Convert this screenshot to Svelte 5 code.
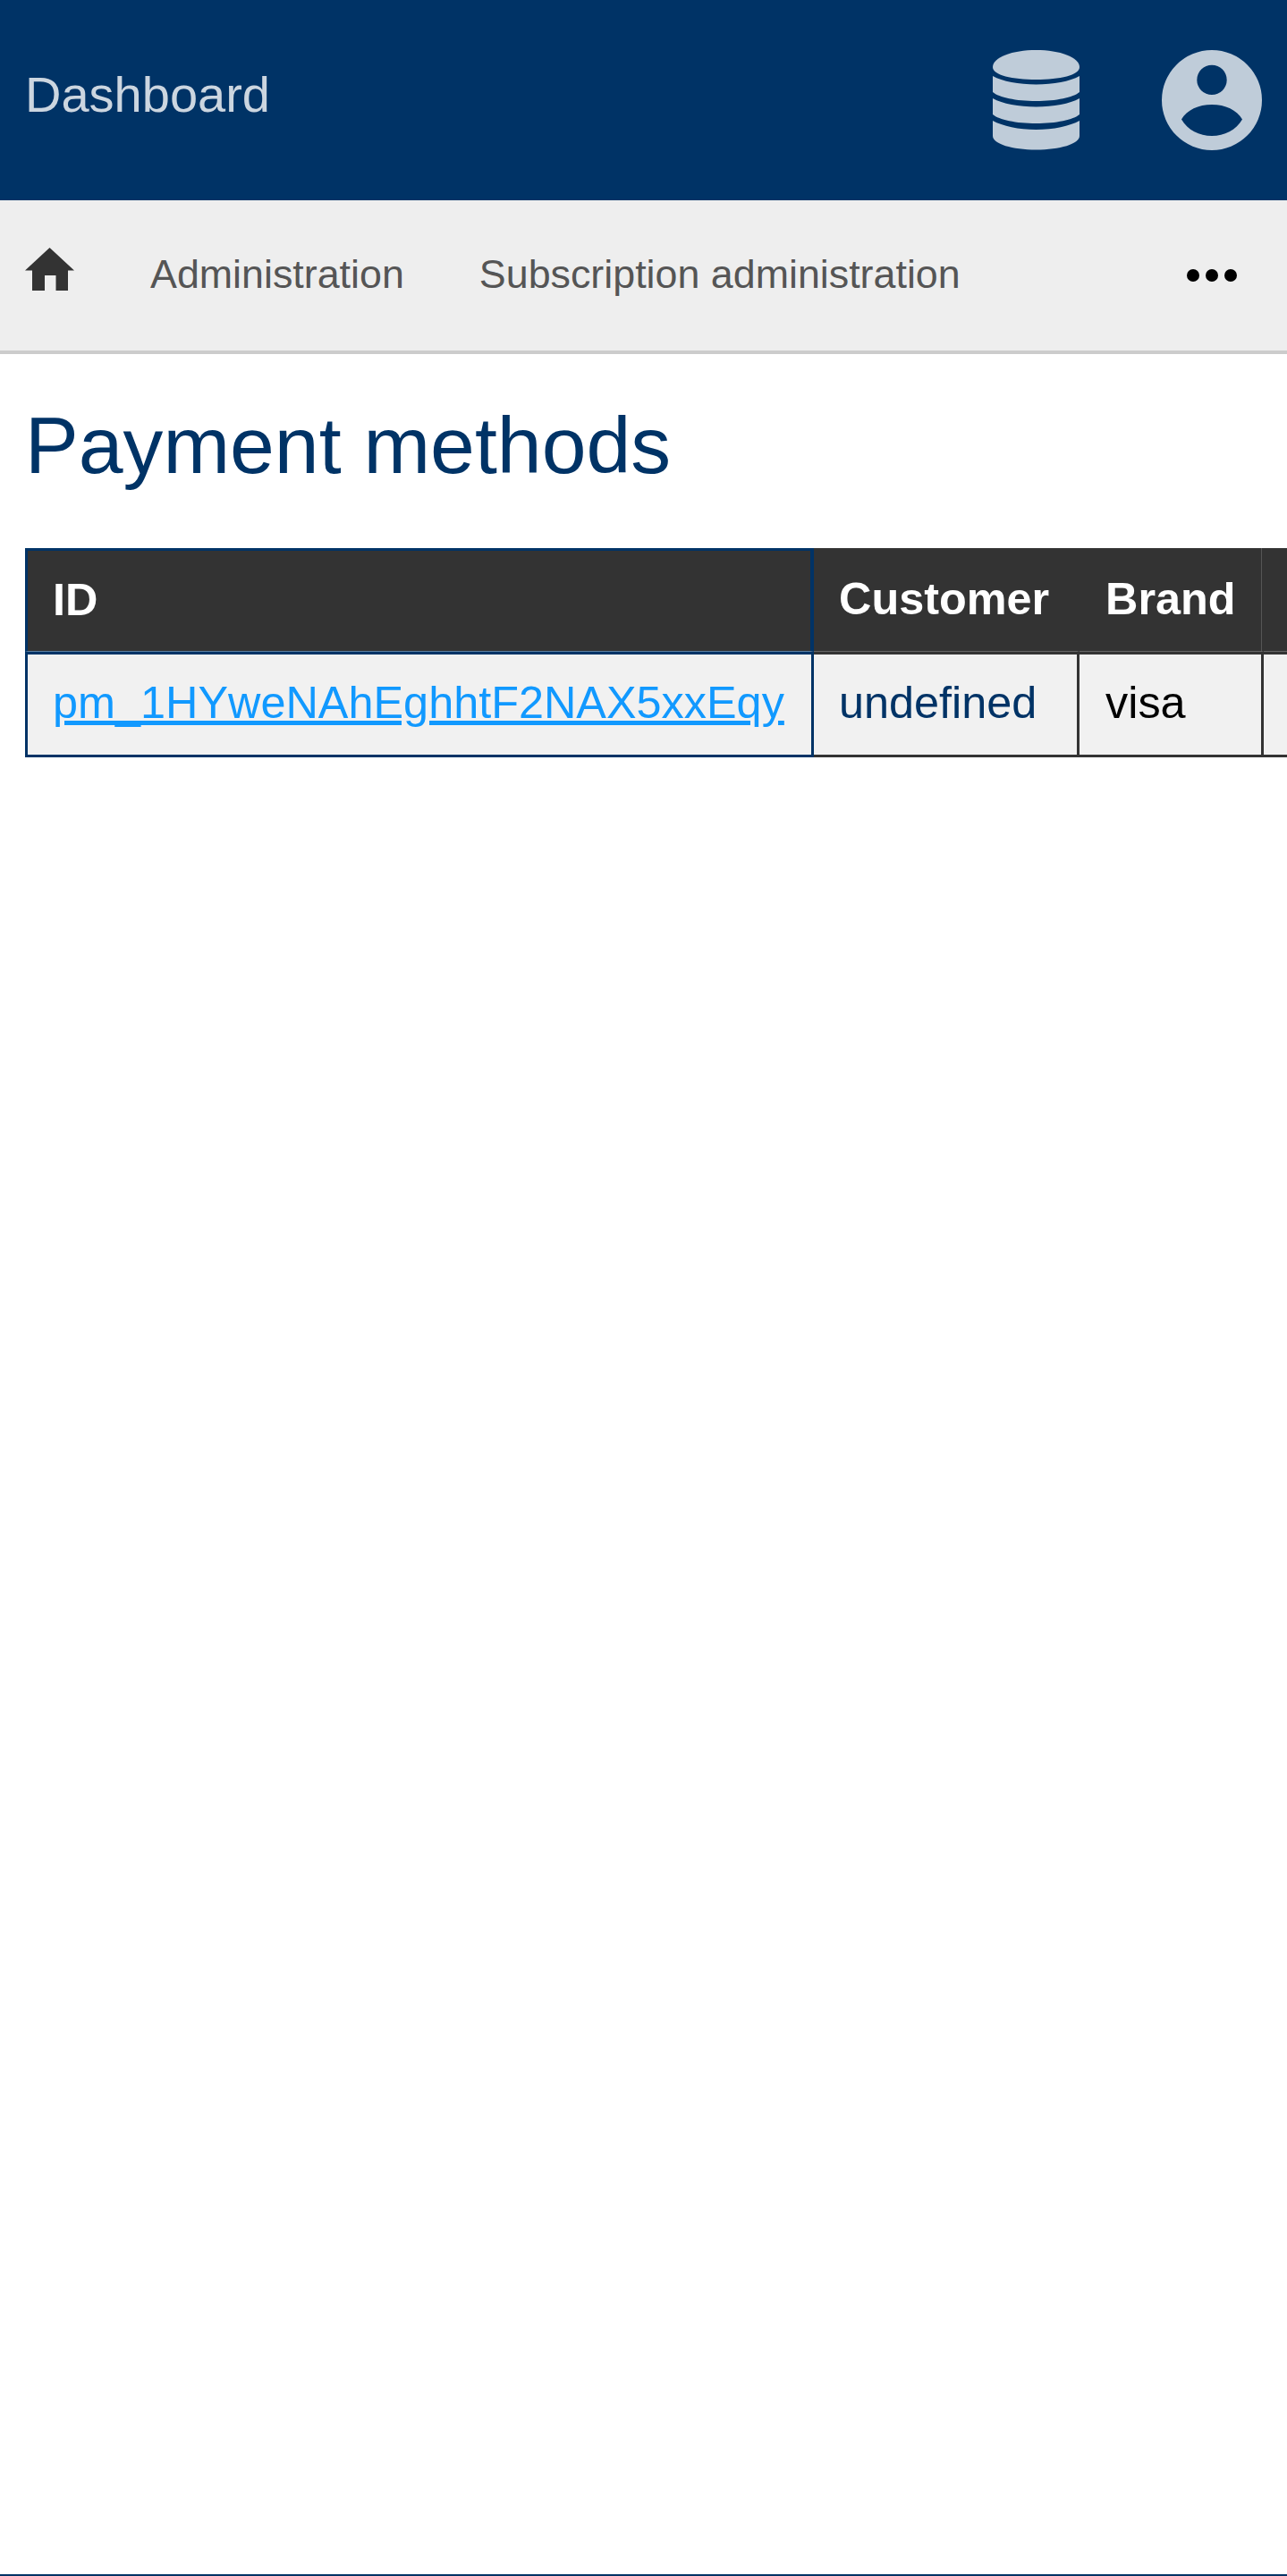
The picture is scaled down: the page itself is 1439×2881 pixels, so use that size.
<script>
  const columns = [
    { key: 'id', label: 'ID' },
    { key: 'customer', label: 'Customer' },
    { key: 'brand', label: 'Brand' },
    { key: 'extra', label: '' }
  ];
  const row = { id: 'pm_1HYweNAhEghhtF2NAX5xxEqy', customer: 'undefined', brand: 'visa', extra: '' };
</script>

<div class="page">
  <header class="topbar">
    <a class="title" href="#/">Dashboard</a>
    <div class="top-icons">
      <svg class="db" viewBox="0 0 97 112" aria-hidden="true">
        <path d="M0 19C0 8 22 0 48.500 0S97 8 97 19C97 28 75 33 48.500 33S0 28 0 19Z" />
        <path d="M0 29C11 35 29 38.500 48.500 38.500S86 35 97 29V47C90 53 71 57 48.500 57S7 53 0 47Z" />
        <path d="M0 54C11 60 29 63.500 48.500 63.500S86 60 97 54V72C90 78 71 82 48.500 82S7 78 0 72Z" />
        <path d="M0 79C11 85 29 89 48.500 89S86 85 97 79V96C97 105 75 111.500 48.500 111.500S0 105 0 96Z" />
      </svg>
      <svg class="user" viewBox="0 0 112 112" aria-hidden="true">
        <path fill-rule="evenodd" d="M56 0a56 56 0 1 0 0 112A56 56 0 0 0 56 0Zm0 16.700a16.700 16.700 0 1 1 0 33.400 16.700 16.700 0 0 1 0-33.400ZM56 61c15 0 28 6 34 16.500C83 89.500 70 96 56 96S29 89.500 22 77.500C28 67 41 61 56 61Z" />
      </svg>
    </div>
  </header>

  <nav class="menu">
    <a class="home" href="#/" aria-label="Home">
      <svg viewBox="0 0 55 48" aria-hidden="true">
        <path d="M27.500 0 55 25.500H48V48H34.500V31H22V48H8V25.500H0Z" />
      </svg>
    </a>
    <a class="link" href="#/admin">Administration</a>
    <a class="link" href="#/subscriptions">Subscription administration</a>
    <span class="more" aria-hidden="true"><i></i><i></i><i></i></span>
  </nav>

  <main class="content">
    <h1>Payment methods</h1>
    <div class="table-wrap">
      <table>
        <thead>
          <tr>
            {#each columns as col}
              <th class={col.key}>{col.label}</th>
            {/each}
          </tr>
        </thead>
        <tbody>
          <tr>
            <td class="id"><a href="#/pm">{row.id}</a></td>
            <td class="customer">{row.customer}</td>
            <td class="brand">{row.brand}</td>
            <td class="extra"></td>
          </tr>
        </tbody>
      </table>
    </div>
  </main>
  <div class="bottom-line"></div>
</div>

<style>
  :global(body) {
    margin: 0;
    background: #fff;
  }

  .page {
    display: flex;
    flex-direction: column;
    width: 1439px;
    height: 2881px;
    overflow: hidden;
    font-family: "Liberation Sans", Arial, sans-serif;
  }

  .topbar {
    display: flex;
    flex: none;
    align-items: center;
    justify-content: space-between;
    height: 224px;
    padding: 0 28px;
    box-sizing: border-box;
    background: #003366;
  }

  .title {
    margin-bottom: 13px;
    color: #ccd6e0;
    font-size: 56px;
    text-decoration: none;
  }

  .top-icons {
    display: flex;
    align-items: center;
    gap: 92px;
  }

  .top-icons svg {
    display: block;
    fill: #bfccd9;
  }

  .db {
    width: 97px;
    height: 112px;
  }

  .user {
    width: 112px;
    height: 112px;
  }

  .menu {
    display: flex;
    flex: none;
    align-items: center;
    height: 172px;
    padding: 0 56px 0 28px;
    box-sizing: border-box;
    background: #eeeeee;
    border-bottom: 4px solid #cccccc;
    font-size: 44.800px;
  }

  .link {
    margin: 0 84px 3px 0;
    color: #555555;
    text-decoration: none;
  }

  .home {
    display: block;
    width: 55px;
    height: 48px;
    margin: 0 85px 14px 0;
  }

  .home svg {
    display: block;
    width: 55px;
    height: 48px;
    fill: #333333;
  }

  .more {
    display: flex;
    gap: 7px;
    margin-left: auto;
  }

  .more i {
    width: 14px;
    height: 14px;
    border-radius: 50%;
    background: #000;
  }

  .content {
    flex: 1;
    padding-left: 28px;
  }

  h1 {
    margin: 51px 0 64px;
    color: #003366;
    font-size: 89.600px;
    font-weight: 400;
    line-height: 102px;
  }

  .table-wrap {
    overflow: hidden;
  }

  table {
    border-collapse: separate;
    border-spacing: 0;
    table-layout: fixed;
    width: 1411px;
    font-size: 50.400px;
  }

  th,
  td {
    padding: 0 28px;
    box-sizing: border-box;
    text-align: left;
    border: 0 solid #333333;
    border-right-width: 3px;
  }

  th {
    height: 116px;
    padding-bottom: 3px;
    background: #333333;
    border-bottom: 1px solid #666666;
    color: #fff;
    font-weight: 700;
  }

  td {
    height: 118px;
    padding-bottom: 6px;
    background: #f1f1f1;
    border-top-width: 3px;
    border-bottom-width: 3px;
    box-shadow: 0 1px 0 #808080;
    color: #000;
  }

  .id {
    width: 882px;
    padding-left: 28px;
    border-color: #003366;
    border-left-width: 3px;
  }

  th.id {
    border-top: 3px solid #003366;
    border-right-width: 4px;
    border-bottom-color: #5f7f9f;
  }

  td.id {
    box-shadow: 0 1px 0 #5f7f9f;
  }

  .customer {
    width: 297px;
  }

  .brand {
    width: 206px;
    padding-left: 29px;
  }

  th.brand {
    border-right-width: 2px;
    box-shadow: inset -1px 0 0 #555555;
  }

  .extra {
    border-right-width: 0;
  }

  td.customer {
    color: #003366;
  }

  td.id a {
    color: #1199ff;
  }

  .bottom-line {
    flex: none;
    height: 2px;
    background: #003366;
  }
</style>
